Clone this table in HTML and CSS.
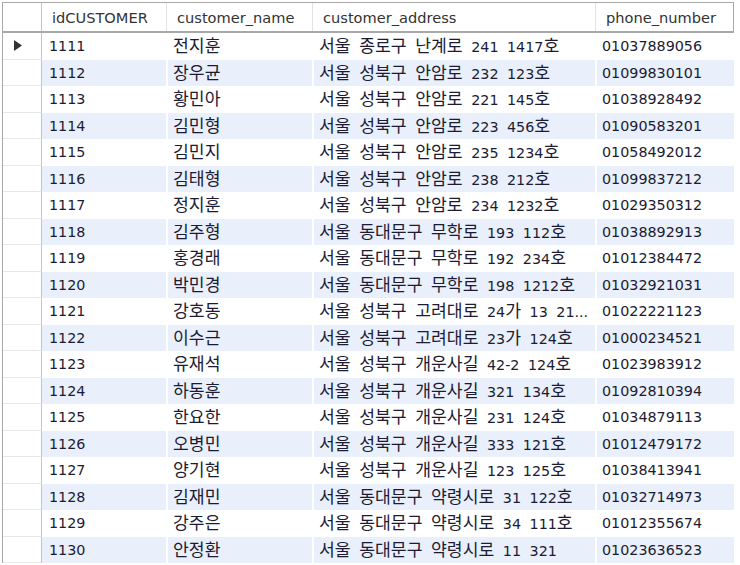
FILE: index.html
```html
<!DOCTYPE html>
<html lang="ko">
<head>
<meta charset="utf-8">
<title>customer</title>
<link rel="stylesheet" href="styles.css">
</head>
<body>
<div class="grid">
  <div class="hd gut"></div>
  <div class="hd c1">idCUSTOMER</div>
  <div class="hd">customer_name</div>
  <div class="hd">customer_address</div>
  <div class="hd last">phone_number</div>
</div>
<div class="rows" id="rows"></div>
<script src="app.js"></script>
</body>
</html>
```
FILE: app.js
```js
const data = [
["1111","전지훈","서울 종로구 난계로 241 1417호","01037889056"],
["1112","장우균","서울 성북구 안암로 232 123호","01099830101"],
["1113","황민아","서울 성북구 안암로 221 145호","01038928492"],
["1114","김민형","서울 성북구 안암로 223 456호","01090583201"],
["1115","김민지","서울 성북구 안암로 235 1234호","01058492012"],
["1116","김태형","서울 성북구 안암로 238 212호","01099837212"],
["1117","정지훈","서울 성북구 안암로 234 1232호","01029350312"],
["1118","김주형","서울 동대문구 무학로 193 112호","01038892913"],
["1119","홍경래","서울 동대문구 무학로 192 234호","01012384472"],
["1120","박민경","서울 동대문구 무학로 198 1212호","01032921031"],
["1121","강호동","서울 성북구 고려대로 24가 13 21...","01022221123"],
["1122","이수근","서울 성북구 고려대로 23가 124호","01000234521"],
["1123","유재석","서울 성북구 개운사길 42-2 124호","01023983912"],
["1124","하동훈","서울 성북구 개운사길 321 134호","01092810394"],
["1125","한요한","서울 성북구 개운사길 231 124호","01034879113"],
["1126","오병민","서울 성북구 개운사길 333 121호","01012479172"],
["1127","양기현","서울 성북구 개운사길 123 125호","01038413941"],
["1128","김재민","서울 동대문구 약령시로 31 122호","01032714973"],
["1129","강주은","서울 동대문구 약령시로 34 111호","01012355674"],
["1130","안정환","서울 동대문구 약령시로 11 321","01023636523"]
];
function fill(el, text) {
  text.split(/([\uAC00-\uD7A3]+)/).forEach(part => {
    if (!part) return;
    if (/[\uAC00-\uD7A3]/.test(part)) {
      const s = document.createElement('span');
      s.className = 'ko';
      s.textContent = part;
      el.appendChild(s);
    } else {
      el.appendChild(document.createTextNode(part));
    }
  });
}
const rows = document.getElementById('rows');
data.forEach((r, i) => {
  const row = document.createElement('div');
  row.className = 'row' + (i % 2 ? ' alt' : '');
  const g = document.createElement('div');
  g.className = 'gut';
  if (i === 0) g.innerHTML = '<svg width="8" height="11" viewBox="0 0 8 11"><path d="M0 0 L8 5.5 L0 11 Z" fill="#333"/></svg>';
  row.appendChild(g);
  r.forEach((t, j) => {
    const c = document.createElement('div');
    c.className = 'cell c' + (j + 1);
    const inner = document.createElement('span');
    inner.className = 'txt';
    fill(inner, t);
    c.appendChild(inner);
    row.appendChild(c);
  });
  rows.appendChild(row);
});
```
FILE: styles.css
```css
html, body {
  margin: 0;
  padding: 0;
  background: #fff;
}
body {
  padding: 2px 0 0 2px;
  font-family: "DejaVu Sans", "Noto Sans CJK KR", sans-serif;
  font-size: 14.3px;
  color: #1b1b33;
  overflow: hidden;
}
.grid, .row {
  display: grid;
  grid-template-columns: 39px 124px 146px 283px 139px;
}
.grid {
  border-top: 1px solid #a9a9a9;
  border-left: 1px solid #a9a9a9;
  border-bottom: 2px solid #a9a9a9;
  width: 731px;
  height: 28px;
  font-size: 14.6px;
}
.hd {
  display: flex;
  align-items: center;
  padding-left: 10px;
  border-left: 1px solid #e3e3e3;
  color: #333;
  white-space: nowrap;
}
.hd.gut {
  border-left: none;
  border-right: 1px solid #c4c4c4;
  padding: 0;
}
.hd.c1 { border-left: none; }
.hd.last { border-right: 1px solid #a9a9a9; }
.rows {
  border-left: 1px solid #a9a9a9;
  width: 731px;
}
.row {
  height: 26.5px;
}
.row .gut {
  border-right: 1px solid #c4c4c4;
  border-bottom: 1px solid #e6e6e6;
  display: flex;
  align-items: center;
  padding-left: 11px;
  background: #fff;
}
.cell {
  display: flex;
  align-items: center;
  padding-left: 5px;
  white-space: nowrap;
  overflow: hidden;
  border-left: 2px solid #fff;
}
.txt {
  line-height: 20px;
}
.cell.c3 .txt { word-spacing: 4px; }
.ko {
  font-family: "Noto Sans CJK KR", sans-serif;
  font-size: 17.2px;
  line-height: 20px;
}
.cell.c1 { border-left: none; padding-left: 7px; }
.row.alt .cell { background: #e9f0fb; background-clip: padding-box; }
```
